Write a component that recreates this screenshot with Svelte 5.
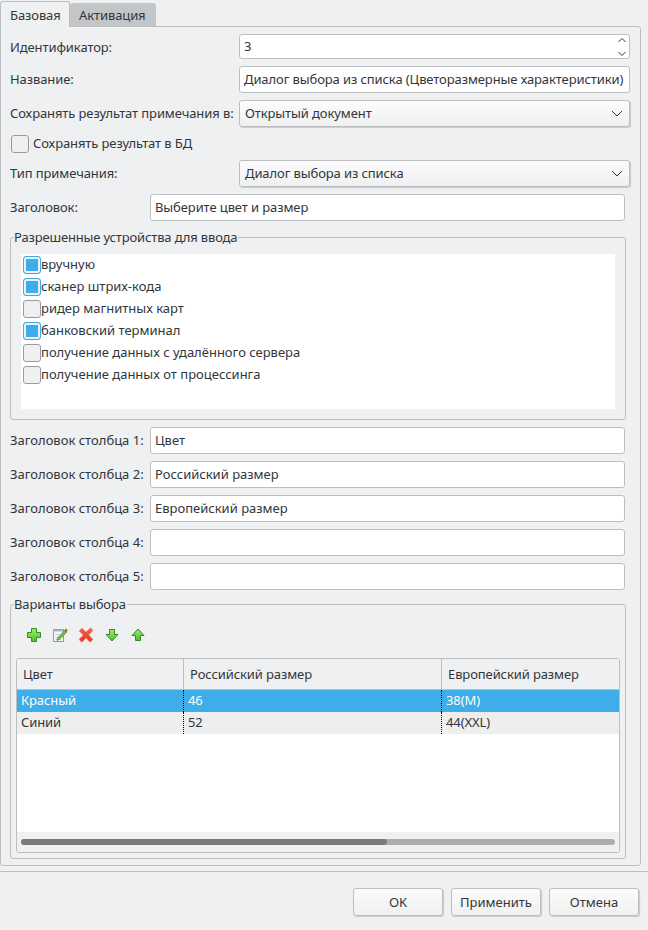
<script>
  const devices = [
    { label: 'вручную', on: true },
    { label: 'сканер штрих-кода', on: true },
    { label: 'ридер магнитных карт', on: false },
    { label: 'банковский терминал', on: true },
    { label: 'получение данных с удалённого сервера', on: false },
    { label: 'получение данных от процессинга', on: false }
  ];
  const columns = ['Цвет', 'Российский размер', 'Европейский размер', '', ''];
  const rows = [
    ['Красный', '46', '38(M)'],
    ['Синий', '52', '44(XXL)']
  ];
</script>

<div class="window">
  <div class="tabs">
    <div class="tab active">Базовая</div>
    <div class="tab">Активация</div>
  </div>
  <div class="pane">
    <div class="row first">
      <span class="label wide">Идентификатор:</span>
      <div class="field spin"><span>3</span>
        <svg class="spinarrows" width="10" height="20" viewBox="0 0 10 20"><path d="M1.5 5 L5 1.5 L8.5 5 M1.5 15 L5 18.5 L8.5 15" fill="none" stroke="#31363b" stroke-width="1"/></svg>
      </div>
    </div>
    <div class="row">
      <span class="label wide">Название:</span>
      <div class="field">Диалог выбора из списка (Цветоразмерные характеристики)</div>
    </div>
    <div class="row">
      <span class="label wide">Сохранять результат примечания в:</span>
      <div class="field combo">Открытый документ
        <svg width="12" height="7" viewBox="0 0 12 7"><path d="M1 1 L6 6 L11 1" fill="none" stroke="#31363b" stroke-width="1"/></svg>
      </div>
    </div>
    <div class="checkrow"><span class="check"></span><span class="checktext">Сохранять результат в БД</span></div>
    <div class="row">
      <span class="label wide">Тип примечания:</span>
      <div class="field combo">Диалог выбора из списка
        <svg width="12" height="7" viewBox="0 0 12 7"><path d="M1 1 L6 6 L11 1" fill="none" stroke="#31363b" stroke-width="1"/></svg>
      </div>
    </div>
    <div class="row short">
      <span class="label narrow">Заголовок:</span>
      <div class="field">Выберите цвет и размер</div>
    </div>

    <fieldset class="group devices">
      <legend>Разрешенные устройства для ввода</legend>
      <div class="list">
        {#each devices as d}
          <div class="item"><span class="check" class:on={d.on}></span><span class="checktext">{d.label}</span></div>
        {/each}
      </div>
    </fieldset>

    {#each columns as c, i}
      <div class="row short col">
        <span class="label narrow">Заголовок столбца {i + 1}:</span>
        <div class="field">{c}</div>
      </div>
    {/each}

    <fieldset class="group variants">
      <legend>Варианты выбора</legend>
      <div class="toolbar">
        <svg width="16" height="16" viewBox="0 0 16 16"><defs><linearGradient id="g" x1="0" y1="0" x2="0" y2="1"><stop offset="0" stop-color="#a6ec6a"/><stop offset="1" stop-color="#4dbb2c"/></linearGradient><linearGradient id="r" x1="0" y1="0" x2="0" y2="1"><stop offset="0" stop-color="#f4684a"/><stop offset="1" stop-color="#e8321c"/></linearGradient></defs><path d="M5.5 1.5h5v4h4v5h-4v4h-5v-4h-4v-5h4z" fill="url(#g)" stroke="#2f8f2a"/></svg>
        <svg width="16" height="16" viewBox="0 0 16 16"><rect x="1.5" y="2.5" width="10" height="12" fill="#f6f7fb" stroke="#8f97ba"/><path d="M1.5 2.5h10v2h-10z" fill="#aab1cd"/><path d="M3.5 7.5h4M3.5 10h3M3.5 12.5h5" stroke="#c3c8da"/><path d="M5.5 11 L12.5 3.5 L14.5 5.5 L7.5 12.5 L5 13.5z" fill="#6cc13a" stroke="#3c8a22" stroke-width=".6"/><path d="M12.5 3.5 L13.8 1.5 L15.5 3 L14.5 5.5z" fill="#d8403a"/></svg>
        <svg width="16" height="16" viewBox="0 0 16 16"><path d="M1 4 L4 1 L8 5 L12.5 .8 L15 3.5 L10.8 8 L15 12.5 L12 15.3 L8 11 L4 15.3 L1 12.5 L5.2 8z" fill="url(#r)" stroke="#f08a70" stroke-width=".6"/></svg>
        <svg width="16" height="16" viewBox="0 0 16 16"><path d="M5.5 2.5h5v5h3.5L8 14 2 7.5h3.5z" fill="url(#g)" stroke="#2f8f2a"/></svg>
        <svg width="16" height="16" viewBox="0 0 16 16"><path d="M5.5 13.5h5v-5h3.5L8 2 2 8.5h3.5z" fill="url(#g)" stroke="#2f8f2a"/></svg>
      </div>
      <div class="table">
        <div class="thead">
          <div class="th c1">Цвет</div>
          <div class="th c2">Российский размер</div>
          <div class="th c3">Европейский размер</div>
        </div>
        {#each rows as r, i}
          <div class="tr" class:selected={i === 0} class:alt={i === 1}>
            <div class="td c1">{r[0]}</div>
            <div class="td c2">{r[1]}</div>
            <div class="td c3">{r[2]}</div>
          </div>
        {/each}
        <div class="tbody-space"></div>
        <div class="scrollbar"><div class="track"><div class="thumb"></div></div></div>
      </div>
    </fieldset>
  </div>

  <div class="footer">
    <button>OK</button>
    <button>Применить</button>
    <button>Отмена</button>
  </div>
</div>

<style>
  :global(body) { margin: 0; background: #eff0f1; }
  .window {
    width: 648px; height: 930px; display: flex; flex-direction: column; box-sizing: border-box;
    background: #eff0f1; color: #31363b;
    font: 13px/18px "Noto Sans", "Open Sans", sans-serif;
    letter-spacing: -0.1px;
    overflow: hidden;
  }
  .tabs { display: flex; height: 27px; align-items: flex-end; position: relative; z-index: 1; flex: none; }
  .tab {
    height: 23px; padding: 0 10px 0 9px; box-sizing: border-box; line-height: 25px; background: #c4c5c7;
    border-radius: 3px 3px 0 0; margin-bottom: 1px;
  }
  .tab.active {
    height: 26px; margin-bottom: 0; background: #eff0f1; border: 1px solid #bcbebf; border-bottom: none;
    line-height: 27px; padding: 0 9px; width: 70px; box-sizing: border-box;
  }
  .pane {
    flex: none; height: 840px; width: 641px; box-sizing: border-box; margin-top: -1px;
    border: 1px solid #bcbebf; border-radius: 0 3px 3px 3px;
    padding: 7px 9px 7px 9px; display: flex; flex-direction: column; gap: 7px;
  }
  .row { display: flex; height: 27px; align-items: center; flex: none; width: 620px; }
  .row.first { height: 25px; }
  .row.short { width: 615px; }
  .row.col { letter-spacing: 0; }
  .label { flex: none; padding-bottom: 2px; box-sizing: border-box; }
  .first .label { padding-bottom: 0; }
  .label.wide { width: 229px; }
  .label.narrow { width: 140px; }
  .field {
    flex: 1; height: 100%; box-sizing: border-box; background: #fff; border: 1px solid #bcbebf; border-radius: 3px;
    padding: 0 4px 2px 4px; display: flex; align-items: center; white-space: nowrap; min-width: 0;
  }
  .field.spin { justify-content: space-between; padding: 0 2px 0 4px; }
  .field.spin span { margin-bottom: 2px; }
  .field.combo {
    background: linear-gradient(#fcfcfc, #eff0f1); justify-content: space-between; padding: 0 6px 2px 5px;
    box-shadow: 1px 1px 1px #c8c9ca;
  }
  .field.combo svg { margin-top: 2px; }
  .check {
    width: 16px; height: 16px; border: 1px solid #9a9b9d; border-radius: 3px; background: #eff0f1;
    flex: none; display: block;
  }
  .check.on {
    background: #3daee9; border-color: #3daee9; box-shadow: inset 0 0 0 2px #eff0f1;
  }
  .checkrow { height: 19px; display: flex; align-items: center; gap: 4px; padding-left: 1px; flex: none; }
  .checktext { margin-bottom: 2px; }
  .group {
    margin: 0; padding: 0; border: 1px solid #bcbebf; border-radius: 3px; width: 616px; box-sizing: border-box; flex: none;
    min-width: 0;
  }
  .group legend { padding: 0 1px 0 0; margin-left: 3px; line-height: 18px; letter-spacing: -0.15px; }
  .devices { height: 192px; }
  .list { height: 155px; margin: 8px 10px 0 10px; background: #fff; }
  .item { height: 22px; display: flex; align-items: center; padding-left: 2px; letter-spacing: 0; }
  .variants { margin-top: -2px; height: 264px; }
  .toolbar { display: flex; gap: 10px; align-items: center; padding: 8px 0 0 15px; height: 36px; box-sizing: border-box; }
  .table {
    height: 195px; box-sizing: border-box; border: 1px solid #bcbebf; border-radius: 3px; background: #fff;
    display: flex; flex-direction: column; margin: 9px 5px 0 5px; overflow: hidden;
  }
  .thead { display: flex; height: 31px; background: #eff0f1; border-bottom: 1px solid #bcbebf; flex: none; box-sizing: border-box; }
  .th { line-height: 30px; padding-left: 6px; box-sizing: border-box; }
  .th.c1, .th.c2 { border-right: 1px solid #bcbebf; }
  .c1 { width: 167px; flex: none; }
  .c2 { width: 258px; flex: none; }
  .c3 { flex: 1; }
  .tr { display: flex; height: 22px; flex: none; }
  .tr.selected { background: #3daee9; color: #fcfcfc; }
  .tr.alt { background: #eeeeee; }
  .td { line-height: 21px; padding-left: 4px; box-sizing: border-box; }
  .td.c1, .td.c2 { border-right: 1px dotted #000; }
  .tbody-space { flex: 1; }
  .scrollbar { height: 20px; background: #eff0f1; padding: 7px 4px 0 4px; box-sizing: border-box; flex: none; }
  .track { height: 6px; border-radius: 3px; background: #acadae; }
  .thumb { height: 6px; width: 366px; border-radius: 3px; background: #7a7b7c; }
  .footer {
    flex: 1; border-top: 1px solid #bcbebf; margin-top: 5px; display: flex; justify-content: flex-end; gap: 8px;
    padding: 16px 9px 0 0; box-sizing: border-box;
  }
  button {
    width: 90px; height: 28px; box-sizing: border-box; border: 1px solid #bcbebf; border-radius: 3px;
    background: linear-gradient(#fcfcfc, #eff0f1); box-shadow: 1px 1px 1px #c8c9ca; color: #31363b;
    font: inherit; padding: 0;
  }
</style>
